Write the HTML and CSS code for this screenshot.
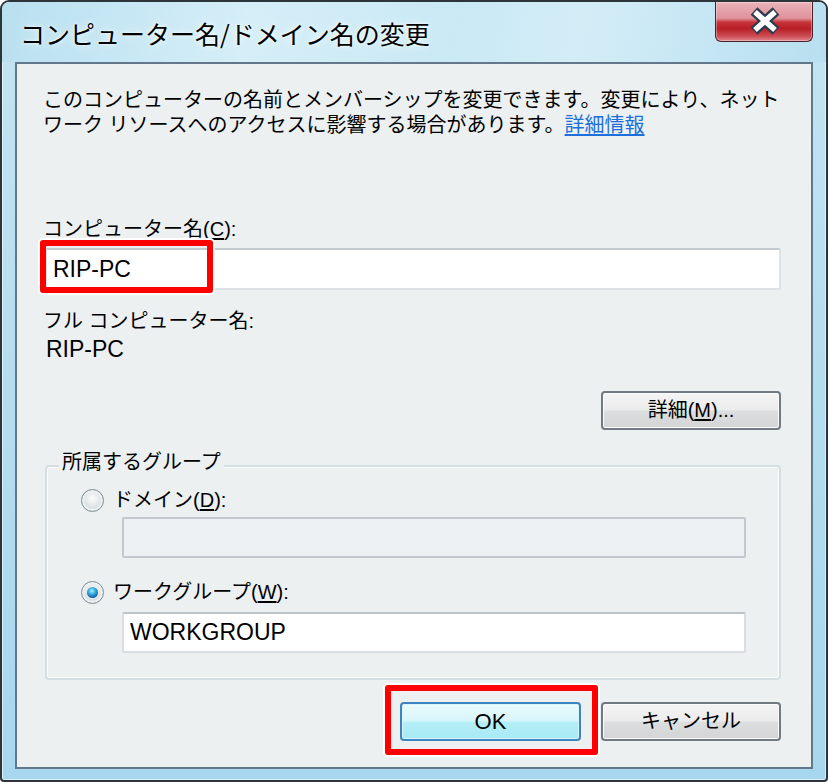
FILE: index.html
```html
<!DOCTYPE html>
<html lang="ja">
<head>
<meta charset="utf-8">
<title>コンピューター名/ドメイン名の変更</title>
<link rel="stylesheet" href="styles.css">
</head>
<body>
<div class="window">
  <div class="titlebar">
    <div class="title">コンピューター名/ドメイン名の変更</div>
    <div class="close">
      <svg width="98" height="40" viewBox="0 0 98 40">
        <path d="M39 10 L61 30 M61 10 L39 30" stroke="#2f3c4e" stroke-width="10" stroke-linecap="butt" fill="none"/>
        <path d="M40 11 L60 29 M60 11 L40 29" stroke="#ffffff" stroke-width="5.5" stroke-linecap="butt" fill="none"/>
      </svg>
    </div>
  </div>
  <div class="client">
    <p class="desc">このコンピューターの名前とメンバーシップを変更できます。変更により、ネット<br>ワーク リソースへのアクセスに影響する場合があります。<a class="link" href="#">詳細情報</a></p>
    <div class="label first">コンピューター名(<u>C</u>):</div>
    <div class="textbox">RIP-PC</div>
    <div class="label full">フル コンピューター名:</div>
    <div class="value">RIP-PC</div>
    <div class="btnrow detail">
      <button class="btn">詳細(<u>M</u>)...</button>
    </div>
    <div class="group">
      <div class="legend">所属するグループ</div>
      <div class="radio-row first-radio"><span class="radio"></span><span class="rlabel">ドメイン(<u>D</u>):</span></div>
      <div class="textbox inset disabled"></div>
      <div class="radio-row second-radio"><span class="radio checked"></span><span class="rlabel">ワークグループ(<u>W</u>):</span></div>
      <div class="textbox inset wg">WORKGROUP</div>
    </div>
    <div class="btnrow footer">
      <button class="btn default">OK</button>
      <button class="btn">キャンセル</button>
    </div>
  </div>
  <div class="mark mark-name"></div>
  <div class="mark mark-ok"></div>
</div>
</body>
</html>
```

FILE: styles.css
```css
html, body {
  margin: 0;
  padding: 0;
  background: #ffffff;
}

body {
  width: 828px;
  height: 784px;
  font-family: "Liberation Sans", "Noto Sans CJK JP", sans-serif;
  color: #000;
}

.window {
  position: relative;
  box-sizing: border-box;
  width: 828px;
  height: 782px;
  border: 2px solid #2d353b;
  border-radius: 9px 9px 4px 4px;
  background: linear-gradient(to bottom, #c4e5f2 0%, #b7def0 40%, #a7d7ee 100%);
  box-shadow: inset 0 0 0 1px rgba(255,255,255,0.55);
  overflow: hidden;
}

.titlebar {
  display: flex;
  align-items: flex-start;
  height: 60px;
  padding: 0 13px 0 18px;
  background: linear-gradient(100deg, #b9e0f0 0%, #d5eef8 30%, #c9e9f5 55%, #d3edf7 70%, #b8dff0 100%);
}

.title {
  margin-top: 13px;
  font-family: "Noto Sans CJK JP", sans-serif;
  font-size: 25px;
  line-height: 36px;
  color: #000;
  text-shadow: 0 0 8px rgba(255,255,255,0.9), 0 0 3px rgba(255,255,255,0.9);
}

.close {
  margin-left: auto;
  width: 98px;
  height: 40px;
  box-sizing: border-box;
  border: 1px solid #4a2126;
  border-top: none;
  border-radius: 0 0 6px 6px;
  background: linear-gradient(to bottom, #eab3b9 0%, #df919a 42%, #c7333a 52%, #b81f25 68%, #cc4e55 88%, #e0868c 100%);
  box-shadow: inset 0 0 0 1px rgba(255,255,255,0.35);
}

.close svg {
  display: block;
  margin: -1px 0 0 -1px;
}

.client {
  box-sizing: border-box;
  height: 707px;
  margin: 0 13px;
  border: 2px solid #62778a;
  background: #ecf0f1;
  padding: 24px 30px 0 28px;
  font-size: 20px;
}

.desc {
  margin: 0 0 0 -2px;
  font-size: 20px;
  line-height: 25px;
  white-space: nowrap;
}

.link {
  color: #1d6fdc;
  text-decoration: underline;
  text-underline-offset: 2px;
}

.label, .value, .rlabel, .legend {
  font-size: 20px;
  line-height: 25px;
  white-space: nowrap;
}

u {
  text-decoration: underline;
  text-underline-offset: 2px;
}

.label.first {
  margin: 79px 0 0 -2px;
}

.textbox {
  box-sizing: border-box;
  height: 42px;
  margin-top: 6px;
  padding: 0 0 0 6px;
  background: #ffffff;
  border: 2px solid #dde2e7;
  border-top-color: #c3cad0;
  border-radius: 2px;
  font-size: 23px;
  line-height: 38px;
  white-space: nowrap;
}

.label.full {
  margin: 19px 0 0 -2px;
}

.value {
  margin: 3px 0 0 0;
  font-size: 23px;
  padding-left: 1px;
}

.btnrow {
  display: flex;
  justify-content: flex-end;
  gap: 20px;
}

.btnrow.detail {
  margin-top: 29px;
}

.btnrow.footer {
  margin-top: 22px;
}

.btn {
  box-sizing: border-box;
  width: 180px;
  height: 39px;
  padding: 0;
  margin: 0;
  border: 2px solid #707a80;
  border-radius: 4px;
  background: linear-gradient(to bottom, #f4f4f4 0%, #ececec 48%, #dcdedf 52%, #d2d4d5 100%);
  box-shadow: inset 0 0 0 1px #fbfbfb;
  font-family: "Liberation Sans", "Noto Sans CJK JP", sans-serif;
  font-size: 20px;
  line-height: 33px;
  color: #000;
  white-space: nowrap;
}

.btn.default {
  width: 181px;
  border-color: #3e84c0;
  background: linear-gradient(to bottom, #eafbfd 0%, #d9f6fb 46%, #b3eef7 54%, #a7eaf5 100%);
  box-shadow: inset 0 0 0 1px #d8f5fb;
  font-size: 22px;
}

.group {
  box-sizing: border-box;
  height: 215px;
  margin-top: 35px;
  border: 2px solid #d4dee3;
  border-radius: 4px;
  box-shadow: inset 0 0 0 1px #fafcfc;
}

.legend {
  width: fit-content;
  margin: -17px 0 0 12px;
  padding: 0 3px;
  background: #ecf0f1;
}

.radio-row {
  display: flex;
  align-items: center;
  gap: 9px;
  height: 25px;
  padding-left: 34px;
}

.first-radio {
  margin-top: 13px;
}

.second-radio {
  margin-top: 22px;
}

.radio {
  position: relative;
  box-sizing: border-box;
  width: 23px;
  height: 23px;
  border-radius: 50%;
  border: 1px solid #7f8d97;
  background: radial-gradient(circle at 50% 40%, #fbfbfb 0%, #e3e7ea 45%, #bcc6cc 100%);
  box-shadow: inset 0 0 0 2px #eef1f2;
  flex: none;
}

.radio.checked::after {
  content: "";
  position: absolute;
  left: 5px;
  top: 5px;
  width: 11px;
  height: 11px;
  border-radius: 50%;
  background: radial-gradient(circle at 45% 35%, #aaf3ff 0%, #3ab0e4 35%, #1565a8 70%, #0d3a6c 100%);
}

.textbox.inset {
  width: 624px;
  height: 41px;
  margin-left: 75px;
  margin-top: 4px;
  line-height: 37px;
  border-color: #d9dee3;
  border-top-color: #bcc4ca;
}

.textbox.disabled {
  background: #eef1f3;
  border-color: #c2c8cd;
}

.textbox.wg {
  margin-top: 7px;
}

.mark {
  position: absolute;
  box-sizing: border-box;
  border: 6px solid #ff0000;
  border-radius: 3px;
  box-shadow: 0 0 0 2px #ffffff;
}

.mark-name {
  left: 38px;
  top: 238px;
  width: 173px;
  height: 53px;
}

.mark-ok {
  left: 383px;
  top: 683px;
  width: 213px;
  height: 70px;
}
```
